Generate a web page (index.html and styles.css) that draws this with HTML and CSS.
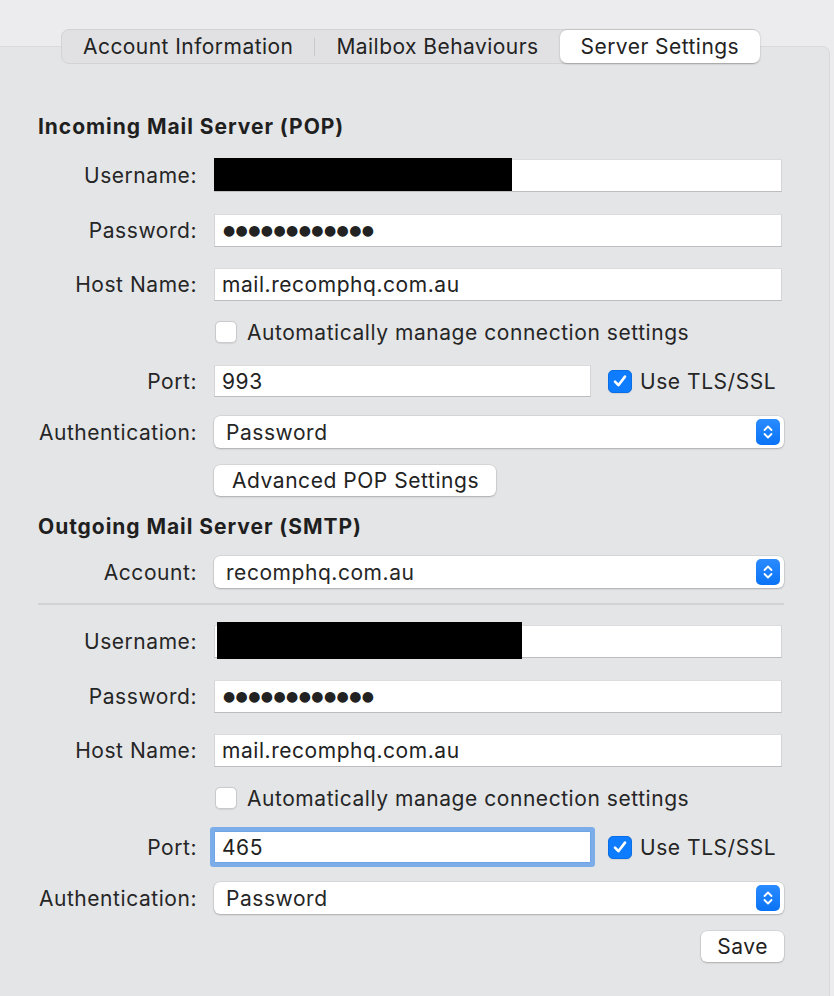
FILE: index.html
```html
<!DOCTYPE html>
<html lang="en">
<head>
    <meta charset="UTF-8">
    <meta name="viewport" content="width=device-width, initial-scale=1.0">
    <title>Server Settings</title>
    <link rel="stylesheet" href="styles.css">
</head>
<body>
    <div class="window">
        <div class="tabs">
            <div class="tab">Account Information</div>
            <div class="tab-divider"></div>
            <div class="tab">Mailbox Behaviours</div>
            <div class="tab active">Server Settings</div>
        </div>

        <div class="panel">
            <h2 class="section-title">Incoming Mail Server (POP)</h2>

            <div class="row first">
                <label class="label">Username:</label>
                <div class="field">
                    <span class="redact redact-in"></span>
                </div>
            </div>
            <div class="row">
                <label class="label">Password:</label>
                <div class="field"><span class="dots">●●●●●●●●●●●●</span></div>
            </div>
            <div class="row host">
                <label class="label">Host Name:</label>
                <div class="field">mail.recomphq.com.au</div>
            </div>
            <div class="row tight">
                <span class="label"></span>
                <span class="checkbox"></span>
                <span class="check-text">Automatically manage connection settings</span>
            </div>
            <div class="row port-row">
                <label class="label">Port:</label>
                <div class="field port">993</div>
                <span class="checkbox checked">
                    <svg width="16" height="16" viewBox="0 0 16 16"><path d="M3 8.6 L6.4 12.2 L13 3.6" fill="none" stroke="#fff" stroke-width="2.6" stroke-linecap="round" stroke-linejoin="round"/></svg>
                </span>
                <span class="check-text">Use TLS/SSL</span>
            </div>
            <div class="row auth">
                <label class="label">Authentication:</label>
                <div class="popup">
                    <span>Password</span>
                    <span class="stepper">
                        <svg width="12" height="18" viewBox="0 0 12 18"><path d="M2.5 7 L6 3.5 L9.5 7 M2.5 11 L6 14.5 L9.5 11" fill="none" stroke="#fff" stroke-width="1.8" stroke-linecap="round" stroke-linejoin="round"/></svg>
                    </span>
                </div>
            </div>
            <div class="row tight">
                <span class="label"></span>
                <button class="btn">Advanced POP Settings</button>
            </div>

            <h2 class="section-title second">Outgoing Mail Server (SMTP)</h2>

            <div class="row mid">
                <label class="label">Account:</label>
                <div class="popup">
                    <span>recomphq.com.au</span>
                    <span class="stepper">
                        <svg width="12" height="18" viewBox="0 0 12 18"><path d="M2.5 7 L6 3.5 L9.5 7 M2.5 11 L6 14.5 L9.5 11" fill="none" stroke="#fff" stroke-width="1.8" stroke-linecap="round" stroke-linejoin="round"/></svg>
                    </span>
                </div>
            </div>

            <div class="separator"></div>

            <div class="row first">
                <label class="label">Username:</label>
                <div class="field">
                    <span class="redact redact-out"></span>
                </div>
            </div>
            <div class="row">
                <label class="label">Password:</label>
                <div class="field"><span class="dots">●●●●●●●●●●●●</span></div>
            </div>
            <div class="row host">
                <label class="label">Host Name:</label>
                <div class="field">mail.recomphq.com.au</div>
            </div>
            <div class="row tight">
                <span class="label"></span>
                <span class="checkbox"></span>
                <span class="check-text">Automatically manage connection settings</span>
            </div>
            <div class="row port-row">
                <label class="label">Port:</label>
                <div class="field port focused">465</div>
                <span class="checkbox checked">
                    <svg width="16" height="16" viewBox="0 0 16 16"><path d="M3 8.6 L6.4 12.2 L13 3.6" fill="none" stroke="#fff" stroke-width="2.6" stroke-linecap="round" stroke-linejoin="round"/></svg>
                </span>
                <span class="check-text">Use TLS/SSL</span>
            </div>
            <div class="row auth">
                <label class="label">Authentication:</label>
                <div class="popup">
                    <span>Password</span>
                    <span class="stepper">
                        <svg width="12" height="18" viewBox="0 0 12 18"><path d="M2.5 7 L6 3.5 L9.5 7 M2.5 11 L6 14.5 L9.5 11" fill="none" stroke="#fff" stroke-width="1.8" stroke-linecap="round" stroke-linejoin="round"/></svg>
                    </span>
                </div>
            </div>
            <div class="row tight save-row">
                <button class="btn">Save</button>
            </div>
        </div>
    </div>
</body>
</html>
```

FILE: styles.css
```css
* {
    margin: 0;
    padding: 0;
    box-sizing: border-box;
}

body {
    font-family: Inter, 'Liberation Sans', sans-serif;
    font-size: 21px;
    letter-spacing: 0.55px;
    color: #262626;
    background: #ececee;
    width: 834px;
    height: 996px;
    overflow: hidden;
}

.window {
    position: relative;
    padding-top: 46px;
    height: 996px;
}

/* segmented tab control sits over the panel edge */
.tabs {
    position: absolute;
    top: 29px;
    left: 61px;
    height: 35px;
    display: flex;
    align-items: center;
    background: #e1e1e3;
    border: 1px solid #d3d3d5;
    border-radius: 8px;
    z-index: 2;
    letter-spacing: 0.45px;
}

.tab {
    height: 33px;
    padding: 0 21px;
    display: flex;
    align-items: center;
    color: #232323;
}

.tab.active {
    background: #fff;
    border-radius: 7px;
    box-shadow: 0 0.5px 2px rgba(0, 0, 0, 0.25);
    margin-right: -1px;
}

.tab-divider {
    width: 1px;
    height: 18px;
    background: #c9c9cb;
}

.panel {
    width: 830px;
    height: 950px;
    background: #e4e5e7;
    border-top: 1px solid #dadadc;
    border-right: 1px solid #d8d8da;
    border-top-right-radius: 8px;
    padding: 68px 0 0 38px;
}

.section-title {
    font-size: 21px;
    font-weight: 700;
    letter-spacing: 0.95px;
    color: #1f1f1f;
    height: 24px;
    line-height: 24px;
}

.section-title.second {
    margin-top: 18px;
}

.row {
    display: flex;
    align-items: center;
    height: 34px;
    margin-top: 21px;
}

.row.first {
    margin-top: 19px;
}

.row.host {
    margin-top: 20px;
}

.row.tight {
    margin-top: 14px;
}

.row.mid {
    margin-top: 16px;
}

.row.auth {
    margin-top: 17px;
}

.row.port-row {
    margin-top: 15px;
}

.label {
    width: 159px;
    margin-right: 17px;
    text-align: right;
    flex-shrink: 0;
    white-space: nowrap;
}

.field {
    position: relative;
    width: 568px;
    height: 33px;
    background: #fff;
    border: 1px solid #d4d4d6;
    border-top-color: #dcdcde;
    border-bottom-color: #bdbdbf;
    padding-left: 7px;
    display: flex;
    align-items: center;
    color: #222;
}

.field.port {
    width: 377px;
    height: 32px;
}

.field.focused {
    box-shadow: 0 0 0 4px #7badea;
    border-color: #6fa3e4;
    border-radius: 1px;
}

.dots {
    font-family: 'DejaVu Sans', sans-serif;
    font-size: 14px;
    letter-spacing: 0.4px;
    color: #222;
    padding-left: 1px;
}

.redact {
    position: absolute;
    background: #000;
}

.redact-in {
    left: -1px;
    top: -2px;
    width: 298px;
    height: 33px;
}

.redact-out {
    left: 2px;
    top: -4px;
    width: 305px;
    height: 37px;
}

.checkbox {
    width: 22px;
    height: 22px;
    background: #fff;
    border: 1px solid #cacacc;
    border-radius: 5px;
    margin-left: 1px;
    box-shadow: 0 0.5px 1px rgba(0, 0, 0, 0.08);
    display: flex;
    align-items: center;
    justify-content: center;
    flex-shrink: 0;
}

.checkbox.checked {
    width: 24px;
    height: 23px;
    margin-left: 17px;
    background: #0d7cfe;
    border-color: #0a6fe6;
}

.check-text {
    margin-left: 10px;
    white-space: nowrap;
}

.checkbox.checked + .check-text {
    margin-left: 8px;
}

.popup {
    width: 570px;
    height: 32px;
    background: #fff;
    border-radius: 6px;
    box-shadow: 0 0 0 0.5px rgba(0, 0, 0, 0.12), 0 1px 2px rgba(0, 0, 0, 0.2);
    display: flex;
    align-items: center;
    justify-content: space-between;
    padding: 0 4px 0 12px;
}

.stepper {
    width: 24px;
    height: 26px;
    border-radius: 5px;
    background: linear-gradient(#2a8bff, #0a73f5);
    display: flex;
    align-items: center;
    justify-content: center;
}

.btn {
    font-family: inherit;
    font-size: 21px;
    letter-spacing: 0.55px;
    color: #222;
    height: 31px;
    padding: 0 17px 0 18px;
    background: #fff;
    border: none;
    border-radius: 6px;
    box-shadow: 0 0 0 0.5px rgba(0, 0, 0, 0.12), 0 1px 2px rgba(0, 0, 0, 0.2);
}

.save-row {
    width: 746px;
    justify-content: flex-end;
}

.save-row .btn {
    padding: 0 16px;
}

.separator {
    width: 746px;
    height: 2px;
    background: #d2d3d5;
    margin-top: 14px;
}
```
